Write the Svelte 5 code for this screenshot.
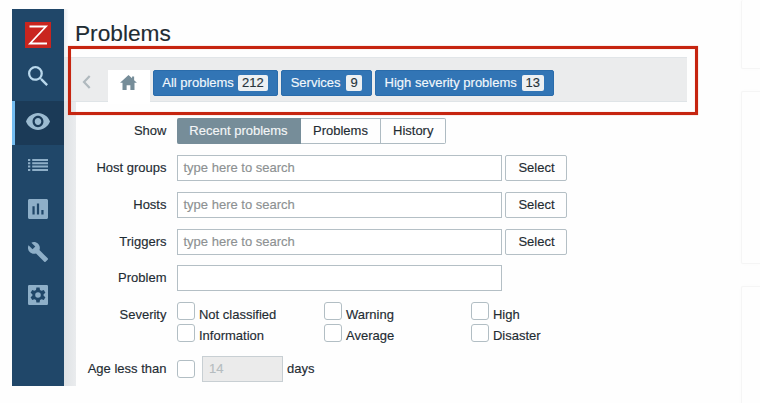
<script>
  const nav = [
    { name: 'search', box: '3 3 17.5 17.5', w: 20, h: 20, d: 'M15.5 14h-.79l-.28-.27A6.47 6.47 0 0 0 16 9.5 6.5 6.5 0 1 0 9.5 16c1.61 0 3.09-.59 4.23-1.57l.27.28v.79l5 4.99L20.49 19zm-6 0C7.01 14 5 11.99 5 9.5S7.01 5 9.5 5 14 7.01 14 9.5 11.99 14 9.5 14z' },
    { name: 'monitoring', box: '1 4.5 22 15', w: 24, h: 17, d: 'M12 4.5C7 4.5 2.73 7.61 1 12c1.73 4.39 6 7.5 11 7.5s9.27-3.11 11-7.5c-1.73-4.39-6-7.5-11-7.5zM12 17c-2.76 0-5-2.24-5-5s2.24-5 5-5 5 2.24 5 5-2.24 5-5 5zm0-8c-1.66 0-3 1.34-3 3s1.34 3 3 3 3-1.34 3-3-1.34-3-3-3z' },
    { name: 'inventory', box: '0 0 20 12', w: 20, h: 12, d: 'M0 0h2.3v2H0zM4.2 0H20v2H4.2zM0 3.3h2.3v2H0zM4.2 3.3H20v2H4.2zM0 6.6h2.3v2H0zM4.2 6.6H20v2H4.2zM0 9.9h2.3v2H0zM4.2 9.9H20v2H4.2z' },
    { name: 'reports', box: '3 3 18 18', w: 20, h: 20, d: 'M19.600 3H4.400C3.600 3 3 3.600 3 4.400v15.200c0 .8.6 1.400 1.400 1.400h15.200c.8 0 1.400-.6 1.400-1.400V4.400c0-.8-.6-1.400-1.400-1.400zM9 17H7V9.500h2zm4 0h-2V7h2zm4 0h-2v-4h2z' },
    { name: 'configuration', box: '1 1 22 22', w: 20, h: 20, d: 'M22.7 19l-9.1-9.1c.9-2.3.4-5-1.5-6.9-2-2-5-2.4-7.4-1.3L9 6 6 9 1.6 4.7C.4 7.1.9 10.1 2.9 12.1c1.9 1.9 4.6 2.4 6.9 1.5l9.1 9.1c.4.4 1 .4 1.4 0l2.3-2.3c.5-.4.5-1.1.1-1.4z' },
    { name: 'administration', box: '0 0 20 20', w: 20, h: 20, d: 'M1.2 0h17.6A1.2 1.2 0 0 1 20 1.2v17.6a1.2 1.2 0 0 1-1.2 1.2H1.2A1.2 1.2 0 0 1 0 18.800V1.2A1.2 1.2 0 0 1 1.200 0zM8.400 2.600L8 4.900L6.400 5.800L4.200 5L2.600 7.700L4.400 9.200V10.800L2.600 12.300L4.200 15L6.400 14.200L8 15.100L8.400 17.400H11.600L12 15.100L13.600 14.200L15.800 15L17.400 12.300L15.600 10.800V9.200L17.400 7.700L15.800 5L13.600 5.800L12 4.900L11.600 2.600zM10 7.200A2.800 2.800 0 1 1 10 12.800A2.800 2.800 0 1 1 10 7.200z' }
  ];
  const tabs = [
    { label: 'All problems', count: 212, w: 125 },
    { label: 'Services', count: 9, w: 90.5 },
    { label: 'High severity problems', count: 13, w: 179 }
  ];
  const searches = ['Host groups', 'Hosts', 'Triggers'];
  const severities = ['Not classified', 'Warning', 'High', 'Information', 'Average', 'Disaster'];
</script>

<div class="page">
  <div class="app">
    <nav class="side">
      <div class="logo">
        <svg width="26" height="26" viewBox="0 0 26 26"><rect width="26" height="26" fill="#c9251f" /><path d="M4.500 4.500H21L5 21.500H22" fill="none" stroke="#fff" stroke-width="1.800" /></svg>
      </div>
      {#each nav as item}
        <div class="item" class:active={item.name === 'monitoring'} class:bright={item.name === 'search'}>
          <svg width={item.w} height={item.h} viewBox={item.box} preserveAspectRatio="none"><path d={item.d} fill="currentColor" fill-rule="evenodd" /></svg>
        </div>
      {/each}
    </nav>
    <main>
      <h1>Problems</h1>
      <div class="tabs">
        <svg class="prev" width="9" height="14" viewBox="0 0 9 14"><path d="M7.700 1L2 7l5.700 6" fill="none" stroke="#b0b9be" stroke-width="2.200" /></svg>
        <div class="home">
          <svg width="17" height="15" viewBox="0 0 18 16"><path d="M9 0L0 8.300h2.600V16H7v-5.200h4V16h4.400V8.300H18L15 5.500V1.500h-2.200v2z" fill="#768d99" /></svg>
        </div>
        {#each tabs as tab}
          <div class="tab" style:width="{tab.w}px"><span>{tab.label}</span><b>{tab.count}</b></div>
        {/each}
      </div>
      <form>
        <div class="row first">
          <div class="label">Show</div>
          <div class="segments"><span class="on">Recent problems</span><span>Problems</span><span>History</span></div>
        </div>
        {#each searches as name}
          <div class="row">
            <div class="label">{name}</div>
            <div class="input">type here to search</div>
            <div class="select">Select</div>
          </div>
        {/each}
        <div class="row"><div class="label">Problem</div><div class="input"></div></div>
        <div class="row severity">
          <div class="label">Severity</div>
          <div class="checks">
            {#each severities as name}
              <div class="check"><i></i><span>{name}</span></div>
            {/each}
          </div>
        </div>
        <div class="row age">
          <div class="label">Age less than</div>
          <i></i>
          <div class="number">14</div>
          <span>days</span>
        </div>
      </form>
    </main>
  </div>
  <aside>
    <div class="card top"></div>
    <div class="card mid"></div>
    <div class="card end"></div>
  </aside>
  <div class="highlight"></div>
</div>

<style>
  :global(body) { background: #fefefe; }
  .page { position: relative; display: flex; justify-content: space-between; width: 760px; height: 403px; overflow: hidden; font: 13px/16px "Liberation Sans", Arial, sans-serif; color: #1f2c33; -webkit-text-stroke: .15px currentColor; }
  .page, .page * { box-sizing: border-box; }
  .app { display: flex; width: 690px; height: 377px; margin: 9.400px 0 0 12px; }
  svg { display: block; }
  .side { width: 52.300px; flex: none; background: #204769; color: #8eafc8; }
  .logo { display: flex; justify-content: center; height: 48.500px; padding-top: 12.500px; }
  .item { display: flex; align-items: center; justify-content: center; height: 43.500px; margin-bottom: -.200px; padding-bottom: 2.500px; }
  .bright { color: #b9d8ec; margin-bottom: 0; padding-bottom: 8px; }
  .active { background: #1b3a57; border-left: 3.500px solid #74bdf2; padding-right: 3.500px; color: #9cbbd1; }
  main { flex: 1; min-width: 0; background: linear-gradient(90deg, #dfe2e5, #eaecee 12px) 0 48px / 12px 330px no-repeat, linear-gradient(90deg, #e9ecef, #fff 5px) 0 0 / 5px 48px no-repeat; }
  h1 { height: 47.600px; margin: 0; padding: 9px 0 0 10.700px; font-size: 22.700px; line-height: 30px; font-weight: 400; }
  .tabs { display: flex; align-items: flex-start; width: 623px; height: 45px; padding-top: 12px; background: linear-gradient(90deg, #e3e6e9, #ebeced 10px); border-top: 1px solid #e1e5e8; border-bottom: 1px solid #dfe4e7; }
  .prev { margin: 5px 16.500px 0 18px; }
  .home { width: 42px; height: 34px; padding: 5px 0 0 12.500px; margin-right: 3px; background: #fff; }
  .tab { display: flex; align-items: center; justify-content: space-between; height: 26px; margin-right: 3.400px; border: 1px solid #2a6cab; border-radius: 2px; background: #3275b5; color: #f3f8fc; padding: 0 9px 0 8.500px; }
  .tab b { padding: 0 4px; height: 16px; border-radius: 2px; background: #edf0f2; color: #27343b; font-weight: 400; }
  form { margin-left: 11.700px; height: 284.400px; padding-top: 16.200px; background: #fefefe; }
  .row { display: flex; align-items: center; height: 26px; margin-bottom: 10.800px; }
  .label { width: 90.500px; flex: none; text-align: right; margin-right: 10.500px; }
  .segments { display: flex; height: 26px; line-height: 24px; }
  .segments span { border: 1px solid #aebbc2; border-left-width: 0; width: 80px; text-align: center; }
  .segments .on { width: 124px; background: #768d99; border-color: #768d99; color: #f4f6f7; border-radius: 2px 0 0 2px; }
  .segments span:last-child { width: 65.500px; border-radius: 0 2px 2px 0; }
  .input { width: 325px; height: 26px; border: 1px solid #b4bfc5; padding-left: 5.500px; line-height: 24px; color: #8d9192; background: #fff; }
  .select { width: 62px; height: 26px; margin-left: 3.500px; border: 1px solid #b4bfc5; border-radius: 2px; line-height: 24px; text-align: center; }
  .severity { height: 44px; align-items: flex-start; margin-bottom: 9.500px; }
  .severity > .label { padding-top: 4.600px; }
  .checks { display: grid; grid-template-columns: repeat(3, 147px); grid-auto-rows: 21.700px; padding-top: .300px; }
  .check { display: flex; }
  .check span { padding: 4.300px 0 0 4px; }
  i { width: 18px; height: 18px; flex: none; border: 1px solid #b2bec4; border-radius: 3px; background: #fff; }
  .number { width: 81.500px; height: 26px; margin: 0 3.500px 0 7px; padding-left: 6px; line-height: 24px; border: 1px solid #c8cfd3; background: #ebebeb; color: #b5bcc0; }
  aside { display: flex; flex-direction: column; gap: 22px; width: 19.500px; }
  .card { background: #fefefe; border: 1px solid #f5f5f5; border-right: 0; border-radius: 2px 0 0 2px; box-shadow: 0 0 6px rgba(0, 0, 0, .015); flex: none; }
  .top { height: 69px; border-top: 0; }
  .mid { height: 173px; }
  .end { height: 120px; }
  .highlight { position: absolute; left: 68px; top: 46px; width: 630px; height: 69px; border: 3px solid #c62510; box-shadow: inset 0 0 1px #e39a8d, 0 0 1px #e39a8d; }
</style>
